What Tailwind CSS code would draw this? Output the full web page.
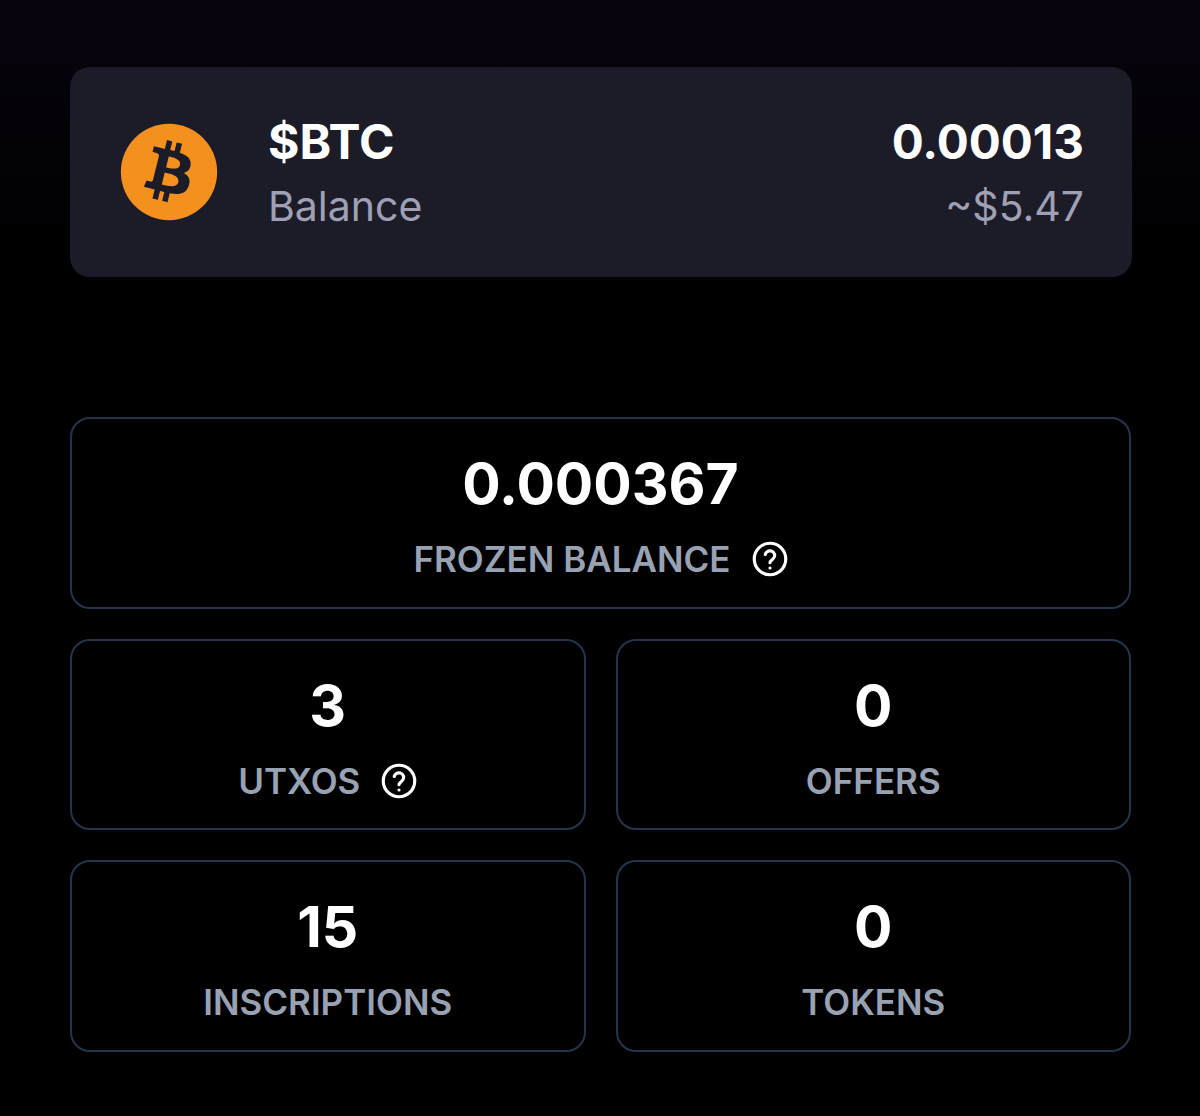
<!doctype html>
<html><head><meta charset="utf-8"><script src="https://cdn.jsdelivr.net/npm/@tailwindcss/browser@4"></script></head>
<body class="m-0 bg-black">
<div class="w-[1200px] h-[1116px] overflow-hidden pl-[70px] pr-[68px] pt-[67px] font-['Inter',sans-serif] bg-[linear-gradient(180deg,#08040f_0px,#040208_110px,#000000_260px)]">
  <div class="h-[210px] rounded-[20px] bg-[#1c1c29] flex items-center pl-[50px] pr-[48px]">
    <svg class="w-[98px] h-[98px] shrink-0" viewBox="0 0 4091 4091"><circle cx="2045.5" cy="2045.5" r="2010" fill="#f4911e"/><path fill="#1c1c29" d="M2947.77 1754.38c40.72,-272.26 -166.56,-418.61 -450,-516.24l91.95 -368.8 -224.5 -55.94 -89.51 359.09c-59.02,-14.72 -119.63,-28.59 -179.87,-42.34l90.16 -361.46 -224.36 -55.94 -92 368.68c-48.84,-11.12 -96.81,-22.11 -143.35,-33.69l0.26 -1.16 -309.59 -77.31 -59.72 239.78c0,0 166.56,38.18 163.05,40.53 90.91,22.69 107.35,82.87 104.62,130.57l-104.74 420.15c6.26,1.59 14.38,3.89 23.34,7.49 -7.49,-1.86 -15.46,-3.89 -23.73,-5.87l-146.81 588.57c-11.11,27.62 -39.31,69.07 -102.87,53.33 2.25,3.26 -163.17,-40.72 -163.17,-40.72l-111.46 256.98 292.15 72.83c54.35,13.63 107.61,27.89 160.06,41.3l-92.9 373.03 224.24 55.94 92 -369.07c61.26,16.63 120.71,31.97 178.91,46.43l-91.69 367.33 224.51 55.94 92.89 -372.33c382.82,72.45 670.67,43.24 791.83,-303.02 97.63,-278.78 -4.86,-439.58 -206.26,-544.44 146.69,-33.83 257.18,-130.31 286.64,-329.61l-0.07 -0.05zm-512.93 719.26c-69.38,278.78 -538.76,128.08 -690.94,90.29l123.28 -494.2c152.17,37.99 640.17,113.17 567.67,403.91zm69.43 -723.3c-63.29,253.58 -453.96,124.75 -580.69,93.16l111.77 -448.21c126.73,31.59 534.85,90.55 468.94,355.05l-0.02 0z"/></svg>
    <div class="ml-[50px] flex flex-col gap-[12px] pt-[4px]">
      <div class="text-[48px] leading-[52px] font-bold text-white">$BTC</div>
      <div class="text-[41px] leading-[52px] text-[#a0a0b4]">Balance</div>
    </div>
    <div class="ml-auto flex flex-col gap-[12px] items-end pt-[4px]">
      <div class="text-[47.5px] leading-[52px] font-bold text-white">0.00013</div>
      <div class="text-[41px] leading-[52px] text-[#a0a0b4]">~$5.47</div>
    </div>
  </div>
  <div class="mt-[140px] grid grid-cols-2 gap-x-[30px] gap-y-[30px] w-[1061px]">
    <div class="col-span-2 h-[191.7px] rounded-[20px] border-[2.5px] border-[#24344c] flex flex-col items-center pt-[31px]">
      <div class="text-[57px] leading-[68px] font-bold text-white">0.000367</div>
      <div class="mt-[21px] flex items-center gap-[21px] text-[35px] leading-[40px] font-semibold text-[#98a2b3]">FROZEN BALANCE
        <svg class="w-[36px] h-[36px]" viewBox="0 0 24 24" fill="none" stroke="#fff" stroke-width="2.1" stroke-linecap="round" stroke-linejoin="round"><circle cx="12" cy="12" r="10.5"/><path d="M8.8 9a3.2 3.2 0 0 1 6.3 .9c0 2.4-3.1 2.6-3.1 4.6"/><path d="M12 18h.01"/></svg>
      </div>
    </div>
    <div class="h-[191.7px] rounded-[20px] border-[2.5px] border-[#24344c] flex flex-col items-center pt-[31px]">
      <div class="text-[57px] leading-[68px] font-bold text-white">3</div>
      <div class="mt-[21px] flex items-center gap-[21px] text-[35px] leading-[40px] font-semibold text-[#98a2b3]">UTXOS
        <svg class="w-[36px] h-[36px]" viewBox="0 0 24 24" fill="none" stroke="#fff" stroke-width="2.1" stroke-linecap="round" stroke-linejoin="round"><circle cx="12" cy="12" r="10.5"/><path d="M8.8 9a3.2 3.2 0 0 1 6.3 .9c0 2.4-3.1 2.6-3.1 4.6"/><path d="M12 18h.01"/></svg>
      </div>
    </div>
    <div class="h-[191.7px] rounded-[20px] border-[2.5px] border-[#24344c] flex flex-col items-center pt-[31px]">
      <div class="text-[57px] leading-[68px] font-bold text-white">0</div>
      <div class="mt-[21px] text-[35px] leading-[40px] font-semibold text-[#98a2b3]">OFFERS</div>
    </div>
    <div class="h-[191.7px] rounded-[20px] border-[2.5px] border-[#24344c] flex flex-col items-center pt-[31px]">
      <div class="text-[57px] leading-[68px] font-bold text-white">15</div>
      <div class="mt-[21px] text-[35px] leading-[40px] font-semibold text-[#98a2b3]">INSCRIPTIONS</div>
    </div>
    <div class="h-[191.7px] rounded-[20px] border-[2.5px] border-[#24344c] flex flex-col items-center pt-[31px]">
      <div class="text-[57px] leading-[68px] font-bold text-white">0</div>
      <div class="mt-[21px] text-[35px] leading-[40px] font-semibold text-[#98a2b3]">TOKENS</div>
    </div>
  </div>
</div>
</body></html>
